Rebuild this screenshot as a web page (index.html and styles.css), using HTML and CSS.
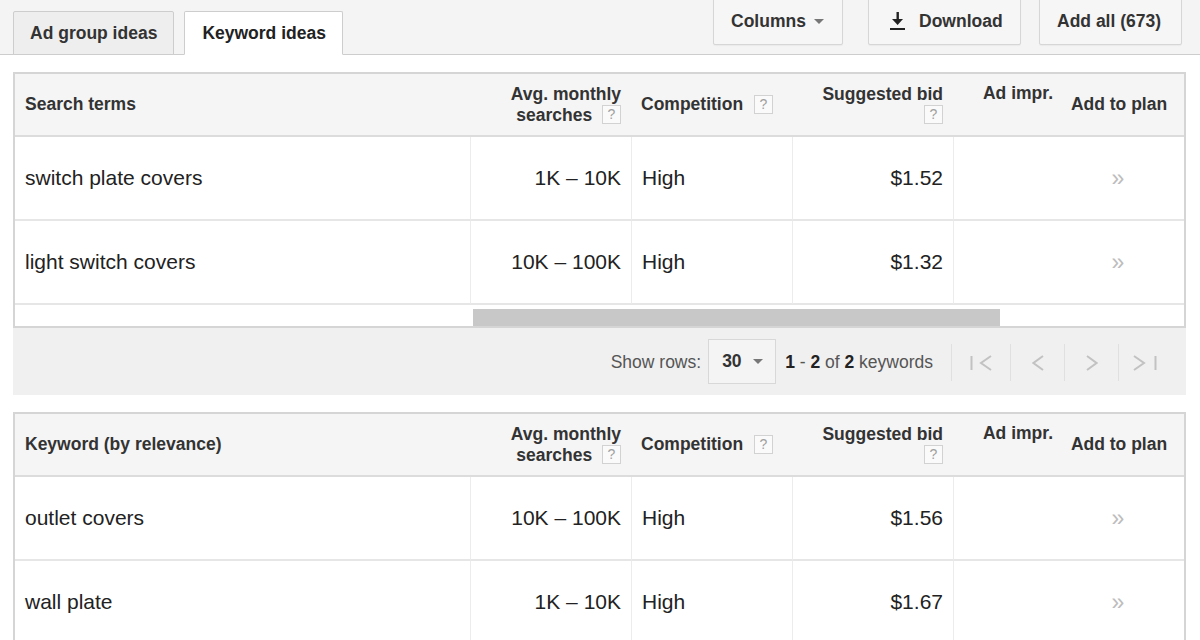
FILE: index.html
```html
<!DOCTYPE html>
<html>
<head>
<meta charset="utf-8">
<link rel="stylesheet" href="styles.css">
</head>
<body>
<div class="topbar">
  <div class="tabs">
    <div class="tab">Ad group ideas</div>
    <div class="tab active">Keyword ideas</div>
  </div>
  <div class="actions">
    <div class="btn btn-columns">Columns <svg class="caret" width="10" height="5" viewBox="0 0 10 5"><polygon points="0,0 10,0 5,5" fill="#777"/></svg></div>
    <div class="btn btn-download"><svg class="dl" width="15" height="18" viewBox="0 0 15 18"><rect x="6.5" y="0" width="2.4" height="8" fill="#222"/><polygon points="2,7 13,7 7.6,13" fill="#222"/><rect x="0" y="16" width="15" height="2" fill="#222"/></svg>Download</div>
    <div class="btn btn-addall">Add all (673)</div>
  </div>
</div>

<div class="main">
  <div class="grid">
    <table>
      <colgroup>
        <col class="c1"><col class="c2"><col class="c3"><col class="c4"><col class="c5"><col class="c6">
      </colgroup>
      <thead>
        <tr>
          <th class="left">Search terms</th>
          <th class="right">Avg. monthly<br>searches <span class="help">?</span></th>
          <th class="left">Competition <span class="help">?</span></th>
          <th class="right">Suggested bid<br><span class="help">?</span></th>
          <th class="right top">Ad impr.</th>
          <th class="center">Add to plan</th>
        </tr>
      </thead>
      <tbody>
        <tr>
          <td class="left">switch plate covers</td>
          <td class="right sep">1K – 10K</td>
          <td class="left sep">High</td>
          <td class="right sep">$1.52</td>
          <td class="sep"></td>
          <td class="center add">»</td>
        </tr>
        <tr>
          <td class="left">light switch covers</td>
          <td class="right sep">10K – 100K</td>
          <td class="left sep">High</td>
          <td class="right sep">$1.32</td>
          <td class="sep"></td>
          <td class="center add">»</td>
        </tr>
        <tr class="scroll">
          <td colspan="6"><div class="thumb"></div></td>
        </tr>
      </tbody>
    </table>
  </div>

  <div class="pager">
    <span class="label">Show rows:</span>
    <div class="rows-select"><b>30</b><svg width="10" height="5" viewBox="0 0 10 5"><polygon points="0,0 10,0 5,5" fill="#777"/></svg></div>
    <span class="count"><b>1</b> - <b>2</b> of <b>2</b> keywords</span>
    <div class="pg first"><svg width="23" height="16" viewBox="0 0 23 16"><line x1="1.5" y1="1" x2="1.5" y2="15" stroke="#c2c2c2" stroke-width="2"/><polyline points="21,1 11,8 21,15" fill="none" stroke="#c2c2c2" stroke-width="2"/></svg></div>
    <div class="pg"><svg width="12" height="16" viewBox="0 0 12 16"><polyline points="11,1 1.5,8 11,15" fill="none" stroke="#c2c2c2" stroke-width="2"/></svg></div>
    <div class="pg"><svg width="12" height="16" viewBox="0 0 12 16"><polyline points="1,1 10.5,8 1,15" fill="none" stroke="#c2c2c2" stroke-width="2"/></svg></div>
    <div class="pg"><svg width="25" height="16" viewBox="0 0 25 16"><polyline points="1,1 11,8 1,15" fill="none" stroke="#c2c2c2" stroke-width="2"/><line x1="22.5" y1="1" x2="22.5" y2="15" stroke="#c2c2c2" stroke-width="2"/></svg></div>
  </div>

  <div class="grid second">
    <table>
      <colgroup>
        <col class="c1"><col class="c2"><col class="c3"><col class="c4"><col class="c5"><col class="c6">
      </colgroup>
      <thead>
        <tr>
          <th class="left">Keyword (by relevance)</th>
          <th class="right">Avg. monthly<br>searches <span class="help">?</span></th>
          <th class="left">Competition <span class="help">?</span></th>
          <th class="right">Suggested bid<br><span class="help">?</span></th>
          <th class="right top">Ad impr.</th>
          <th class="center">Add to plan</th>
        </tr>
      </thead>
      <tbody>
        <tr>
          <td class="left">outlet covers</td>
          <td class="right sep">10K – 100K</td>
          <td class="left sep">High</td>
          <td class="right sep">$1.56</td>
          <td class="sep"></td>
          <td class="center add">»</td>
        </tr>
        <tr>
          <td class="left">wall plate</td>
          <td class="right sep">1K – 10K</td>
          <td class="left sep">High</td>
          <td class="right sep">$1.67</td>
          <td class="sep"></td>
          <td class="center add">»</td>
        </tr>
      </tbody>
    </table>
  </div>
</div>
</body>
</html>
```

FILE: styles.css
```css
* { box-sizing: border-box; }

body {
  margin: 0;
  font-family: "Liberation Sans", Arial, sans-serif;
  color: #222;
  background: #fff;
  overflow: hidden;
}

/* ---------- top bar ---------- */
.topbar {
  display: flex;
  height: 55px;
  background: #f4f4f4;
  border-bottom: 1px solid #cdcdcd;
  padding: 0 18px 0 13px;
}

.tabs {
  display: flex;
  gap: 10px;
  align-self: flex-end;
  margin-bottom: -1px;
}

.tab {
  height: 44px;
  display: flex;
  align-items: center;
  padding: 0 16px;
  font-size: 17.5px;
  font-weight: bold;
  color: #333;
  background: #eeeeee;
  border: 1px solid #cdcdcd;
  border-bottom-color: #cdcdcd;
  border-radius: 2px 2px 0 0;
}

.tab.active {
  background: #fff;
  color: #222;
  border-bottom-color: #fff;
  padding: 0 16px 0 17px;
}

.actions {
  margin-left: auto;
  display: flex;
  align-self: flex-start;
}

.btn {
  height: 48px;
  margin-top: -3px;
  display: flex;
  align-items: center;
  padding: 0 17px;
  font-size: 17.5px;
  font-weight: bold;
  color: #333;
  background: #f6f6f6;
  border: 1px solid #d6d6d6;
  border-radius: 2px;
  box-shadow: 0 1px 1px rgba(0,0,0,0.04);
}

.btn-columns { width: 130px; }
.btn-columns .caret { margin-left: 8px; }

.btn-download { width: 153px; margin-left: 25px; padding-left: 21px; }
.btn-download .dl { margin-right: 14px; }

.btn-addall { width: 143px; margin-left: 18px; }

/* ---------- content ---------- */
.main {
  padding: 17px 14px 0 13px;
}

.grid {
  border: 2px solid #d5d5d5;
  background: #fff;
}

.grid.second {
  margin-top: 17px;
  border-bottom: none;
}

table {
  width: 100%;
  table-layout: fixed;
  border-collapse: separate;
  border-spacing: 0;
}

col.c1 { width: 455px; }
col.c2 { width: 161px; }
col.c3 { width: 161px; }
col.c4 { width: 161px; }
col.c5 { width: 105px; }
col.c6 { width: 126px; }

th {
  height: 63px;
  background: #f5f5f5;
  border-bottom: 2px solid #dcdcdc;
  padding: 0 10px;
  font-size: 17.5px;
  line-height: 21px;
  font-weight: bold;
  color: #333;
  vertical-align: middle;
}

th.top {
  vertical-align: top;
  padding-top: 9px;
  padding-right: 5px;
}

td {
  height: 84px;
  border-bottom: 2px solid #e6e6e6;
  padding: 0 10px;
  font-size: 21px;
  color: #222;
  vertical-align: middle;
  white-space: nowrap;
}

td.sep { border-left: 1px solid #ececec; }

.left { text-align: left; }
.right { text-align: right; }
.center { text-align: center; }

th.center { padding: 0 4px 0 0; }
td.add {
  color: #bdbdbd;
  font-size: 23px;
  padding: 0 6px 0 0;
}

.help {
  display: inline-block;
  width: 19px;
  height: 19px;
  border: 1px solid #d2d2d2;
  background: #fafafa;
  color: #a0a0a0;
  font-size: 14px;
  font-weight: normal;
  line-height: 17px;
  text-align: center;
  vertical-align: middle;
  margin-left: 5px;
  margin-top: -2px;
}

th.left .help { margin-left: 6px; }

tr.scroll td {
  height: 21px;
  border-bottom: none;
  padding: 4px 0 0 0;
  vertical-align: top;
}

.thumb {
  margin-left: 458px;
  width: 527px;
  height: 17px;
  background: #c8c8c8;
}

/* ---------- pager ---------- */
.pager {
  height: 67px;
  background: #f0f0f0;
  display: flex;
  align-items: center;
  justify-content: flex-end;
  padding: 2px 14px 0 0;
  font-size: 17.5px;
  color: #555;
}

.pager .label { margin-right: 7px; }

.rows-select {
  width: 68px;
  height: 45px;
  margin-top: -2px;
  border: 1px solid #d8d8d8;
  background: #f4f4f4;
  display: flex;
  align-items: center;
  padding-left: 13px;
  gap: 11px;
  color: #333;
  margin-right: 9px;
}

.count { margin-right: 18px; }
.count b { color: #222; }

.pg {
  width: 54px;
  height: 37px;
  border-left: 1px solid #e0e0e0;
  display: flex;
  align-items: center;
  justify-content: center;
}

.pg.first { width: 59px; }
```
